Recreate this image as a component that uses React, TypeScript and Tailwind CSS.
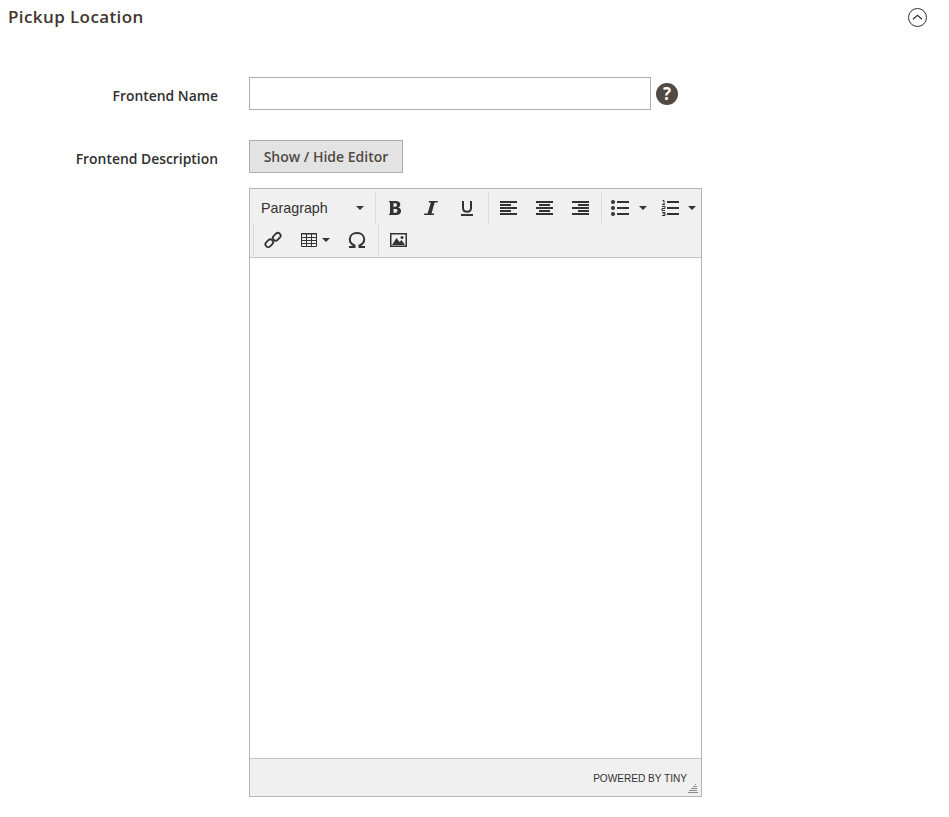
import React from 'react';

const Caret = () => (
  <svg width="8" height="4" viewBox="0 0 8 4" className="shrink-0">
    <path d="M0 0h8L4 4z" fill="#333" />
  </svg>
);

const Sep = () => <div className="w-px self-stretch bg-[#d9d9d9]" />;

const ToolButton = ({ children }: { children: React.ReactNode }) => (
  <div className="flex h-full w-9 items-center justify-center">{children}</div>
);

const AlignIcon = ({ lines }: { lines: [number, number][] }) => (
  <svg width="18" height="16" viewBox="0 0 18 16">
    {lines.map(([x, w], i) => (
      <rect key={i} x={x} y={1 + i * 3} width={w} height="2" fill="#333" />
    ))}
  </svg>
);

const ListIcon = ({ numbered }: { numbered?: boolean }) => (
  <svg width="18" height="16" viewBox="0 0 18 16">
    {[2, 8, 14].map((y) => (
      <rect key={y} x="6" y={y - 1} width="12" height="2" fill="#333" />
    ))}
    {numbered ? (
      <g fill="none" stroke="#333" strokeWidth="1">
        <path d="M1.500 0.500h1.500v4M1 4.500h3" />
        <path d="M1 6.500h3v2H1v2h3" />
        <path d="M1 12.500h3v3H1M2 14h2" />
      </g>
    ) : (
      <g fill="#333">
        <circle cx="2" cy="2" r="2" />
        <circle cx="2" cy="8" r="2" />
        <circle cx="2" cy="14" r="2" />
      </g>
    )}
  </svg>
);

const BoldIcon = () => (
  <svg width="12" height="14" viewBox="0 0 12 14">
    <path
      fillRule="evenodd"
      fill="#333"
      d="M0 0h6.800C9.600 0 11.300 1.300 11.300 3.500c0 1.400-.8 2.500-2 3 1.700.4 2.700 1.600 2.700 3.400C12 12.500 10.100 14 7.200 14H0v-1.300h1V1.300H0zM4.500 2.300v3.400h1.700c1.100 0 1.700-.6 1.700-1.700S7.300 2.300 6.200 2.300zm0 5.700v3.700h2c1.200 0 1.900-.7 1.900-1.900S7.700 8 6.500 8z"
    />
  </svg>
);

const ItalicIcon = () => (
  <svg width="14" height="14" viewBox="0 0 14 14">
    <path fill="#333" d="M5 0h9l-.4 1.600h-2.900L7.500 12.400h2.700l-.4 1.600H0l.4-1.600h3.200L6.800 1.600H4.600z" />
  </svg>
);

const UnderlineIcon = () => (
  <svg width="12" height="15" viewBox="0 0 12 15">
    <path fill="none" stroke="#333" strokeWidth="2" d="M2 0v7c0 2.500 1.500 3.800 4 3.800S10 9.500 10 7V0" />
    <rect x="0" y="13" width="12" height="2" fill="#333" />
  </svg>
);

const LinkIcon = () => (
  <svg width="18" height="18" viewBox="0 0 18 18">
    <g fill="none" stroke="#333" strokeWidth="1.800">
      <rect x="1" y="9.500" width="8.500" height="5.500" rx="2.700" transform="rotate(-45 5.250 12.250)" />
      <rect x="8.500" y="3" width="8.500" height="5.500" rx="2.700" transform="rotate(-45 12.750 5.750)" />
    </g>
  </svg>
);

const TableIcon = () => (
  <svg width="16" height="14" viewBox="0 0 16 14">
    <path
      fill="none"
      stroke="#333"
      d="M.500.500h15v13H.500zM.500 4.500h15M.500 7.500h15M.500 10.500h15M5.500 1v12M10.500 1v12"
    />
    <rect x="0" y="0" width="16" height="1.500" fill="#333" />
  </svg>
);

const OmegaIcon = () => (
  <svg width="18" height="16" viewBox="0 0 18 16">
    <path
      fill="none"
      stroke="#333"
      strokeWidth="2"
      d="M1 15h5.500v-1.500C3.500 12.300 1.800 10 1.800 7.300 1.800 3.500 4.900 1 9 1s7.200 2.500 7.200 6.300c0 2.700-1.700 5-4.700 6.200V15H17"
    />
  </svg>
);

const ImageIcon = () => (
  <svg width="17" height="14" viewBox="0 0 17 14">
    <path fillRule="evenodd" fill="#333" d="M0 0h17v14H0zM1.500 1.500v11h14v-11z" />
    <path fill="#333" d="M2 12l4.500-7 3 4 2-2 3.500 5z" />
    <circle cx="12" cy="4.500" r="1.500" fill="#333" />
  </svg>
);

const App = () => {
  return (
    <div className="h-[817px] w-[949px] overflow-hidden bg-white font-['Open_Sans',sans-serif] text-[#303030]">
      {/* Section header */}
      <div className="flex items-center justify-between pl-2 pr-[22px] pt-[6px]">
        <h2 className="text-[17px] font-semibold leading-[22px] tracking-[0.4px] text-[#41362f]">Pickup Location</h2>
        <span className="flex h-[19px] w-[19px] items-center justify-center rounded-full border border-[#303030]">
          <svg width="11" height="6" viewBox="0 0 11 6">
            <path d="M1 5.200l4.500-4 4.500 4" fill="none" stroke="#303030" strokeWidth="1.200" />
          </svg>
        </span>
      </div>

      {/* Frontend Name */}
      <div className="mt-[49px] flex items-center">
        <label className="w-[218px] pt-[5px] text-right text-[13.900px] font-semibold text-[#303030]">Frontend Name</label>
        <input type="text" className="ml-[31px] h-[33px] w-[402px] border border-[#adadad] bg-white" />
        <span className="ml-[5px] flex h-[22px] w-[22px] items-center justify-center rounded-full bg-[#514943] text-[17px] font-bold leading-none text-white">
          ?
        </span>
      </div>

      {/* Frontend Description */}
      <div className="mt-[30px] flex items-start">
        <label className="w-[218px] pt-[9px] text-right text-[13.900px] font-semibold text-[#303030]">Frontend Description</label>
        <div className="ml-[31px]">
          <button className="h-[33px] w-[154px] border border-[#adadad] bg-[#e3e3e3] text-sm font-semibold text-[#514943]">
            Show / Hide Editor
          </button>

          {/* Editor */}
          <div className="mt-[15px] flex h-[609px] w-[453px] flex-col border border-[#b5b5b5] font-['Liberation_Sans',sans-serif]">
            <div className="h-[69px] border-b border-[#c5c5c5] bg-[#f0f0f0] pt-1">
              <div className="flex h-[30px] items-center">
                <div className="flex h-full w-[125px] items-center justify-between pl-[11px] pr-[11px] text-[14.300px] text-[#333]">
                  <span className="pt-px">Paragraph</span>
                  <Caret />
                </div>
                <Sep />
                <div className="ml-px flex h-full">
                  <ToolButton><BoldIcon /></ToolButton>
                  <ToolButton><ItalicIcon /></ToolButton>
                  <ToolButton><UnderlineIcon /></ToolButton>
                </div>
                <div className="ml-[3px] flex h-full">
                  <Sep />
                </div>
                <div className="ml-px flex h-full">
                  <ToolButton><AlignIcon lines={[[1, 17], [1, 11], [1, 17], [1, 11], [1, 17]]} /></ToolButton>
                  <ToolButton><AlignIcon lines={[[1, 17], [4, 11], [1, 17], [4, 11], [1, 17]]} /></ToolButton>
                  <ToolButton><AlignIcon lines={[[1, 17], [7, 11], [1, 17], [7, 11], [1, 17]]} /></ToolButton>
                </div>
                <div className="ml-[3px] flex h-full">
                  <Sep />
                </div>
                <div className="ml-[9px] flex items-center">
                  <ListIcon />
                  <div className="ml-[10px]"><Caret /></div>
                </div>
                <div className="ml-[14px] flex items-center">
                  <ListIcon numbered />
                  <div className="ml-[9px]"><Caret /></div>
                </div>
              </div>
              <div className="mt-[2px] flex h-[30px] items-center pl-[3px]">
                <Sep />
                <div className="ml-px flex h-full w-9 items-center justify-center"><LinkIcon /></div>
                <div className="flex h-full w-12 items-center pl-[10px]">
                  <TableIcon />
                  <div className="ml-[5px]"><Caret /></div>
                </div>
                <ToolButton><OmegaIcon /></ToolButton>
                <div className="ml-[3px] flex h-full">
                  <Sep />
                </div>
                <div className="ml-px flex h-full w-9 items-center justify-center"><ImageIcon /></div>
              </div>
            </div>
            <div className="flex-1 bg-white" />
            <div className="relative flex h-[38px] items-center justify-end border-t border-[#c5c5c5] bg-[#f0f0f0] pr-[14px] pt-[2px] text-[10.100px] text-[#333]">
              <span>POWERED BY TINY</span>
              <svg width="10" height="9" viewBox="0 0 10 9" className="absolute bottom-[3px] right-[3px]">
                <path stroke="#8c8c8c" strokeWidth="1" d="M7 .500h1M5 2.500h4M3 4.500h6M1 6.500h8M0 8.500h10" />
              </svg>
            </div>
          </div>
        </div>
      </div>
    </div>
  );
};

export default App;
